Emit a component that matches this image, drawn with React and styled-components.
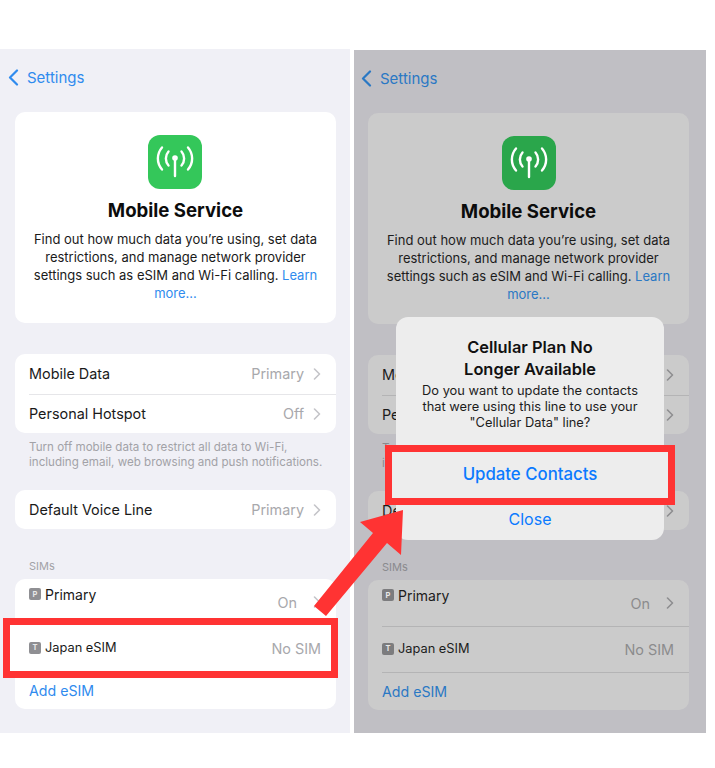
import React from 'react'
import styled, { createGlobalStyle } from 'styled-components'

const Global = createGlobalStyle`
  body {
    margin: 0;
    background: #fff;
    font-family: Inter, "Liberation Sans", sans-serif;
  }
`

const Page = styled.div`
  position: relative;
  display: flex;
  gap: 4px;
  width: 715px;
  height: 768px;
  padding-top: 49px;
  box-sizing: border-box;
`

const Phone = styled.div`
  position: relative;
  width: ${p => (p.$dim ? 352 : 350)}px;
  height: ${p => (p.$dim ? 683 : 684)}px;
  margin-top: ${p => (p.$dim ? 1 : 0)}px;
  padding-left: ${p => (p.$dim ? 14 : 15)}px;
  box-sizing: border-box;
  flex-shrink: 0;
  background: var(--bg);
  --bg: ${p => (p.$dim ? '#c0bfc4' : '#f0f0f6')};
  --card: ${p => (p.$dim ? '#cbcbcb' : '#ffffff')};
  --ink: ${p => (p.$dim ? '#1c1c1c' : '#1a1a1a')};
  --blue: ${p => (p.$dim ? '#2a78c4' : '#2f8bee')};
  --muted: ${p => (p.$dim ? '#8b8b8d' : '#a8a8ac')};
  --note: ${p => (p.$dim ? '#8a8a8e' : '#a2a2a7')};
  --line: ${p => (p.$dim ? '#b4b4b5' : '#e6e6e9')};
  --chev: ${p => (p.$dim ? '#8e8e90' : '#c4c4c8')};
  --green: ${p => (p.$dim ? '#2aa64b' : '#34c75a')};
`

const Nav = styled.div`
  display: flex;
  align-items: center;
  gap: 8px;
  height: 56px;
  margin: 0 0 7px -7px;
  color: var(--blue);
  font-size: 15px;
`

const Card = styled.div`
  display: flex;
  flex-direction: column;
  align-items: center;
  width: 321px;
  height: 211px;
  padding-top: 23px;
  box-sizing: border-box;
  border-radius: 10px;
  background: var(--card);
`

const AppIcon = styled.div`
  display: flex;
  align-items: center;
  justify-content: center;
  width: 54px;
  height: 54px;
  margin-left: ${p => (p.$dim ? 0 : -1)}px;
  border-radius: 12px;
  background: var(--green);
`

const Title = styled.h1`
  margin: 9px 0 8px;
  font-size: 18.6px;
  line-height: 24px;
  font-weight: 700;
  color: #0c0c0c;
`

const Desc = styled.p`
  margin: 0;
  width: 300px;
  text-align: center;
  font-size: 13px;
  line-height: 18px;
  color: var(--ink);
`

const Link = styled.span`
  color: var(--blue);
`

const Group = styled.div`
  width: 321px;
  margin-top: ${p => p.$top || 0}px;
  border-radius: 10px;
  background: var(--card);
`

const Row = styled.div`
  position: relative;
  z-index: ${p => (p.$mark ? 1 : 'auto')};
  display: flex;
  align-items: center;
  height: ${p => p.$h}px;
  margin-left: 14px;
  padding-right: 15px;
  box-sizing: border-box;
  border-top: ${p => (p.$first ? 'none' : '1px solid var(--line)')};
  color: var(--ink);
  font-size: 14.4px;

  ${p =>
    p.$mark &&
    `
    &::before {
      content: '';
      position: absolute;
      z-index: -1;
      top: -8px;
      bottom: -7px;
      left: -26px;
      right: -2px;
      border: 7px solid #ff3333;
      background: #fff;
    }
  `}
`

const Name = styled.div`
  display: flex;
  align-items: center;
  gap: 4px;
  margin-bottom: ${p => p.$lift || 0}px;
`

const Value = styled.span`
  margin-left: auto;
  margin-right: ${p => p.$pad || 0}px;
  color: var(--muted);
`

const Chevron = styled.svg`
  width: 8px;
  height: 12px;
  margin-left: 9px;
  fill: none;
  stroke: var(--chev);
  stroke-width: 1.6;
  stroke-linecap: round;
  stroke-linejoin: round;
`

const Note = styled.p`
  margin: 0;
  height: 57px;
  padding: 7px 0 0 14px;
  box-sizing: border-box;
  font-size: 11.6px;
  line-height: 14.5px;
  white-space: nowrap;
  color: var(--note);
`

const SectionLabel = styled.div`
  height: 50px;
  padding: 30px 0 0 14px;
  box-sizing: border-box;
  font-size: 11px;
  line-height: 14px;
  color: var(--note);
`

const Badge = styled.span`
  display: flex;
  align-items: center;
  justify-content: center;
  width: 12px;
  height: 12px;
  border-radius: 2px;
  background: ${p => (p.$dim ? '#7c7c7e' : '#8f8f93')};
  color: #e8e8e8;
  font-size: 7.5px;
  font-weight: 700;
`

const SimName = styled.span`
  font-size: ${p => p.$size}px;
`

const AddLink = styled.span`
  margin-bottom: 1px;
  color: var(--blue);
  font-size: 14.2px;
`

const Dialog = styled.div`
  position: absolute;
  z-index: 5;
  top: 267px;
  left: 42px;
  display: flex;
  flex-direction: column;
  width: 268px;
  height: 223px;
  border-radius: 12px;
  background: #ededed;
`

const DialogBody = styled.div`
  height: 135px;
  padding-top: 19px;
  box-sizing: border-box;
  text-align: center;
`

const DialogTitle = styled.h2`
  margin: 0 0 3px;
  font-size: 16.4px;
  line-height: 22px;
  font-weight: 600;
  color: #111;
`

const DialogText = styled.p`
  margin: 0;
  font-size: 12.85px;
  line-height: 16px;
  color: #1c1c1c;
`

const DialogButton = styled.div`
  position: relative;
  display: flex;
  align-items: center;
  justify-content: center;
  height: ${p => p.$h}px;
  box-sizing: border-box;
  color: #0a7aff;
  font-size: ${p => (p.$mark ? 16.8 : 16)}px;
  font-weight: ${p => (p.$mark ? 500 : 400)};
  z-index: ${p => (p.$mark ? 1 : 'auto')};
  ${p =>
    p.$mark &&
    `
    border-bottom: 1px solid #dcdcdc;
    &::before {
      content: '';
      position: absolute;
      z-index: -1;
      top: -7px;
      bottom: -9px;
      left: -11px;
      right: -11px;
      border: 7px solid #ff3333;
      background: #ededed;
    }
  `}
`

const Arrow = styled.svg`
  position: absolute;
  z-index: 10;
  left: 300px;
  top: 500px;
  width: 120px;
  height: 130px;
  fill: #ff3333;
`

const ChevronIcon = () => (
  <Chevron viewBox="0 0 8 12">
    <polyline points="1.5,1 6.5,6 1.5,11" />
  </Chevron>
)

const BackIcon = () => (
  <svg width="11" height="17" viewBox="0 0 11 17" fill="none" stroke="currentColor" strokeWidth="2.2" strokeLinecap="round" strokeLinejoin="round">
    <polyline points="9,1.5 2,8.5 9,15.5" />
  </svg>
)

const AntennaIcon = () => (
  <svg width="54" height="54" viewBox="0 0 54 54" fill="none" stroke="#fff" strokeWidth="2.4" strokeLinecap="round">
    <path d="M14 12.5C8.5 19 8.5 28 14 34.5" />
    <path d="M40 12.5C45.5 19 45.5 28 40 34.5" />
    <path d="M20.5 16.5C17 20.5 17 26.5 20.5 30.5" />
    <path d="M33.5 16.5C37 20.5 37 26.5 33.5 30.5" />
    <path d="M27 24V41" />
    <circle cx="27" cy="23" r="2.8" fill="#fff" stroke="none" />
  </svg>
)

const Screen = ({ dim }) => (
  <>
    <Nav>
      <BackIcon />
      Settings
    </Nav>
    <Card>
      <AppIcon $dim={dim}>
        <AntennaIcon />
      </AppIcon>
      <Title>Mobile Service</Title>
      <Desc>
        Find out how much data you’re using, set data restrictions, and manage network provider settings such as eSIM and Wi-Fi calling. <Link>Learn more...</Link>
      </Desc>
    </Card>

    <Group $top={31}>
      <Row $h={39.5} $first>
        <Name>Mobile Data</Name>
        <Value>Primary</Value>
        <ChevronIcon />
      </Row>
      <Row $h={39.5}>
        <Name>Personal Hotspot</Name>
        <Value>Off</Value>
        <ChevronIcon />
      </Row>
    </Group>
    <Note>
      Turn off mobile data to restrict all data to Wi-Fi,
      <br />
      including email, web browsing and push notifications.
    </Note>

    <Group>
      <Row $h={39} $first>
        <Name>Default Voice Line</Name>
        <Value>Primary</Value>
        <ChevronIcon />
      </Row>
    </Group>
    <SectionLabel>SIMs</SectionLabel>

    <Group>
      <Row $h={46} $first>
        <Name $lift={16}>
          <Badge $dim={dim}>P</Badge>
          <SimName $size={14}>Primary</SimName>
        </Name>
        <Value $pad={7}>On</Value>
        <ChevronIcon />
      </Row>
      <Row $h={46} $mark={!dim}>
        <Name $lift={2}>
          <Badge $dim={dim}>T</Badge>
          <SimName $size={12.8}>Japan eSIM</SimName>
        </Name>
        <Value>No SIM</Value>
      </Row>
      <Row $h={38}>
        <AddLink>Add eSIM</AddLink>
      </Row>
    </Group>
  </>
)

const App = () => (
  <Page>
    <Global />
    <Phone>
      <Screen />
    </Phone>
    <Phone $dim>
      <Screen dim />
      <Dialog>
        <DialogBody>
          <DialogTitle>
            Cellular Plan No
            <br />
            Longer Available
          </DialogTitle>
          <DialogText>
            Do you want to update the contacts
            <br />
            that were using this line to use your
            <br />
            "Cellular Data" line?
          </DialogText>
        </DialogBody>
        <DialogButton $h={45} $mark>
          Update Contacts
        </DialogButton>
        <DialogButton $h={43}>Close</DialogButton>
      </Dialog>
    </Phone>
    <Arrow viewBox="0 0 120 130">
      <polygon points="103,10 101,55 87,43 26,116 14,106 73,33 60,22" />
    </Arrow>
  </Page>
)

export default App
